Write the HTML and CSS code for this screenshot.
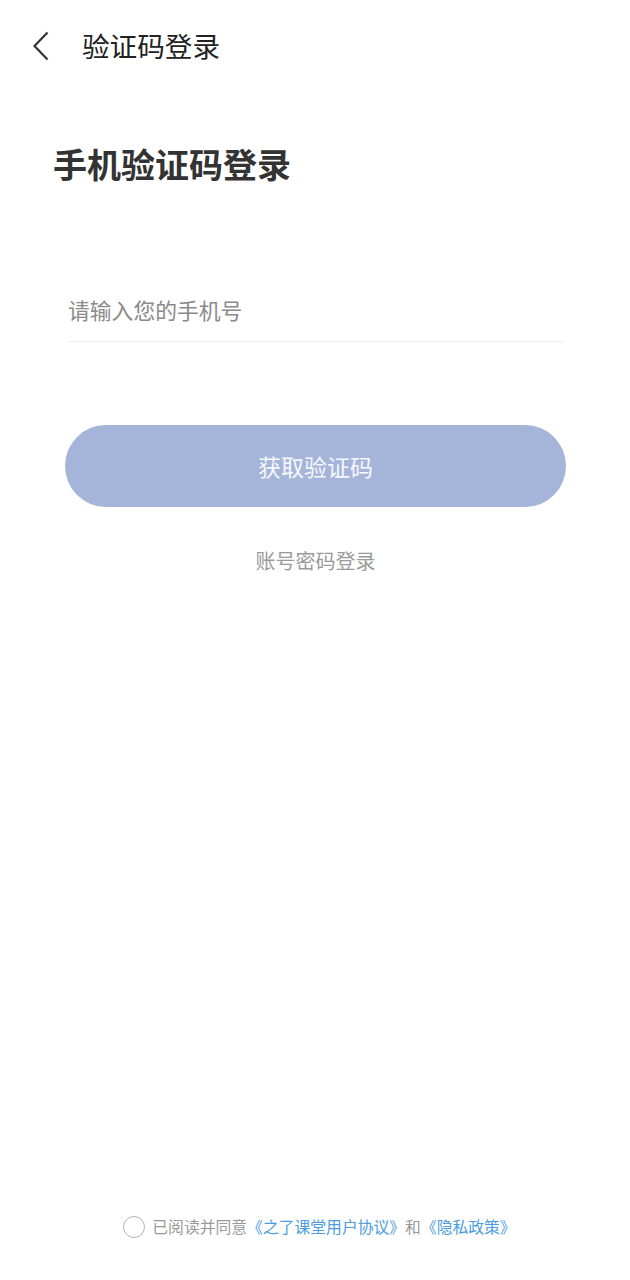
FILE: index.html
```html
<!DOCTYPE html>
<html lang="zh-CN">
  <head>
    <meta charset="UTF-8" />
    <meta name="viewport" content="width=device-width, initial-scale=1.0" />
    <title>验证码登录</title>
    <link rel="stylesheet" href="styles.css">
  </head>
  <body>
    <div class="page">
      <!-- Top bar -->
      <div class="nav-bar">
        <span class="back">
          <svg width="18" height="30" viewBox="0 0 18 30">
            <path d="M15.5 1.5 L2.5 15 L15.5 28.5" fill="none" stroke="#333" stroke-width="2.2" />
          </svg>
        </span>
        <span class="nav-title">验证码登录</span>
      </div>

      <h1 class="title">手机验证码登录</h1>

      <div class="form">
        <input type="tel" class="phone-input" placeholder="请输入您的手机号" />
        <button class="code-btn">获取验证码</button>
        <div class="switch-link">账号密码登录</div>
      </div>

      <!-- Agreement -->
      <div class="agreement">
        <span class="radio"></span>
        <span class="agree-text">已阅读并同意<a class="link">《之了课堂用户协议》</a>和<a class="link">《隐私政策》</a></span>
      </div>
    </div>
  </body>
</html>
```

FILE: styles.css
```css
/* Global */
body {
  margin: 0;
  padding: 0;
  background-color: #fff;
  font-family: "Noto Sans CJK SC", "Noto Sans", sans-serif;
  color: #333;
}

.page {
  height: 1280px;
  display: flex;
  flex-direction: column;
}

/* Nav bar */
.nav-bar {
  height: 92px;
  display: flex;
  align-items: center;
  padding-left: 32px;
}

.back {
  display: flex;
  width: 18px;
  height: 30px;
  margin-top: -1px;
}

.nav-title {
  margin-left: 32px;
  font-size: 27.6px;
  color: #222;
  line-height: 1;
}

.title {
  margin: 52px 0 0 53px;
  font-size: 34px;
  font-weight: bold;
  color: #333;
  line-height: 40px;
}

/* Form */
.form {
  padding: 0 64px 0 65px;
  display: flex;
  flex-direction: column;
  align-items: center;
}

.phone-input {
  box-sizing: border-box;
  width: calc(100% - 6px);
  margin: 96px 0 0 3px;
  align-self: flex-start;
  height: 62px;
  padding: 0 0 2px;
  border: none;
  border-bottom: 1px solid #f0f0f0;
  font-family: inherit;
  font-size: 21.8px;
  color: #333;
  outline: none;
}

.phone-input::placeholder {
  color: #8a8a8a;
}

.code-btn {
  width: 100%;
  height: 82px;
  margin-top: 83px;
  border: none;
  border-radius: 41px;
  background-color: #a5b5da;
  color: #f6f8fc;
  font-family: inherit;
  font-size: 23px;
  padding: 0;
}

.switch-link {
  margin-top: 39px;
  font-size: 20px;
  color: #9a9a9a;
  line-height: 30px;
}

/* Agreement */
.agreement {
  margin-top: auto;
  margin-bottom: 42px;
  display: flex;
  align-items: center;
  justify-content: center;
  padding-left: 9px;
}

.radio {
  box-sizing: border-box;
  width: 22px;
  height: 22px;
  border: 1.5px solid #b3b3b3;
  border-radius: 50%;
  margin-right: 7px;
}

.agree-text {
  font-size: 15.8px;
  color: #999;
  line-height: 22px;
}

.link {
  color: #4b9ce0;
}
```
